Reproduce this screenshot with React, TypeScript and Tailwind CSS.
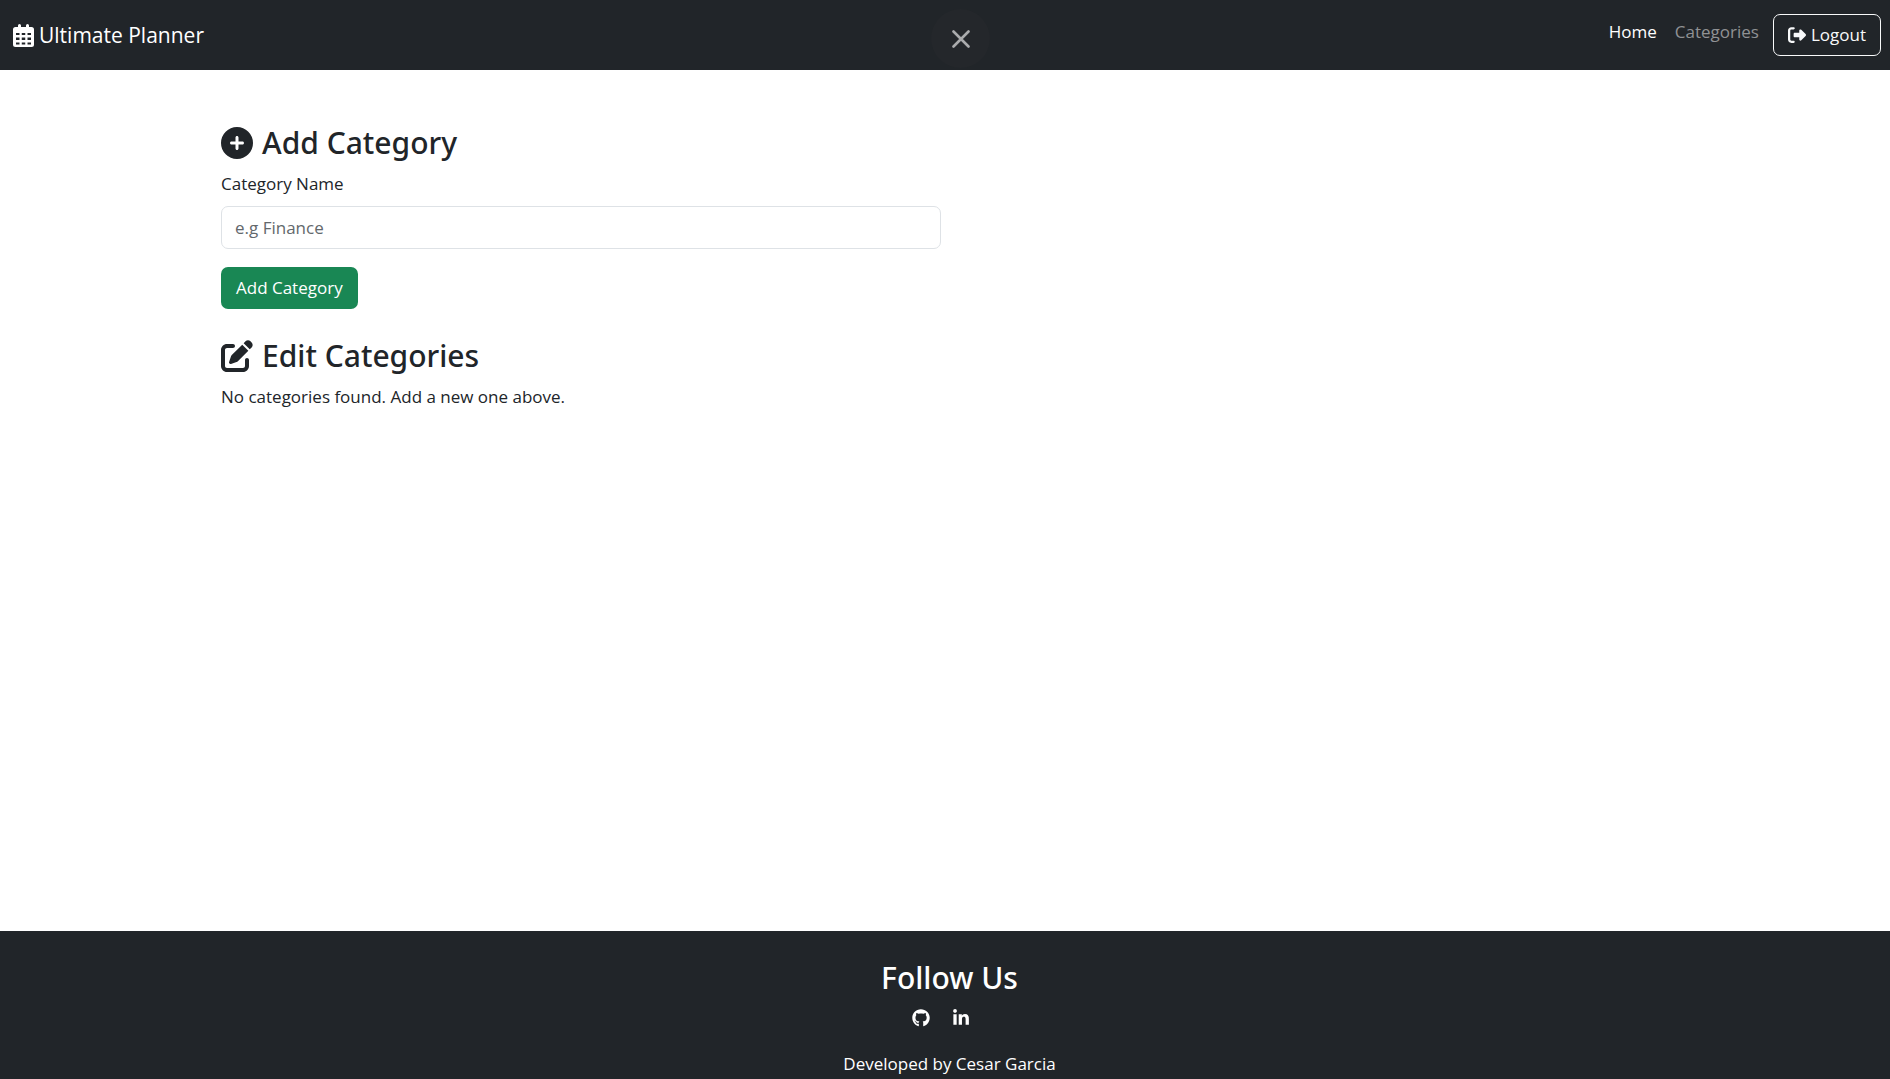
import {
  FaCirclePlus,
  FaGithub,
  FaLinkedinIn,
  FaPenToSquare,
  FaRightFromBracket,
} from 'react-icons/fa6';

function CalendarIcon() {
  return (
    <svg viewBox="0 0 21 23" className="h-[23px] w-[21px]" fill="currentColor" aria-hidden="true">
      <path
        fillRule="evenodd"
        d="M5 1.500a1.500 1.500 0 0 1 3 0V3h5V1.500a1.500 1.500 0 0 1 3 0V3h2.500A2.500 2.500 0 0 1 21 5.500v15a2.500 2.500 0 0 1-2.500 2.500h-16A2.500 2.500 0 0 1 0 20.500v-15A2.500 2.500 0 0 1 2.500 3H5ZM3 9v2h3.500V9ZM8.750 9v2h3.500V9ZM14.500 9v2H18V9ZM3 13.500V16h3.500v-2.500ZM8.750 13.500V16h3.500v-2.500ZM14.500 13.500V16H18v-2.500ZM3 18.500v2h3.500v-2ZM8.750 18.500v2h3.500v-2ZM14.500 18.500v2H18v-2Z"
      />
    </svg>
  );
}

function Header() {
  return (
    <header className="relative flex h-[70px] items-center justify-between bg-[#212529] pl-[13px] pr-[9px] text-white">
      <a href="#" className="flex items-center gap-[5px] text-[21px]">
        <CalendarIcon />
        Ultimate Planner
      </a>
      <button
        type="button"
        aria-label="Close"
        className="absolute left-1/2 top-[9px] ml-[-14px] flex size-[59px] items-center justify-center rounded-full bg-[#24272b] text-[#aaabad]"
      >
        <svg viewBox="0 0 18 18" className="size-[18px]" fill="none" stroke="currentColor" strokeWidth="2.6" strokeLinecap="round">
          <path d="M1.500 1.500l15 15M16.500 1.500l-15 15" />
        </svg>
      </button>
      <nav className="flex items-start text-[17px] leading-[26px]">
        <a href="#" className="mr-[18px] pt-[5px]">Home</a>
        <a href="#" className="mr-[14px] pt-[5px] text-[#909294]">Categories</a>
        <button type="button" className="flex h-[42px] items-center gap-[5px] rounded-[7px] border border-[#f8f9fa] px-[14px] text-[#f8f9fa]">
          <FaRightFromBracket className="size-[18px]" />
          Logout
        </button>
      </nav>
    </header>
  );
}

function Heading({ children }: { children: React.ReactNode }) {
  return (
    <h2 className="mb-[7px] flex items-center gap-[9px] font-['Noto_Sans',sans-serif] text-[30px] font-medium leading-[42px]">
      {children}
    </h2>
  );
}

export default function App() {
  return (
    <div className="flex h-screen flex-col overflow-hidden bg-white font-['Open_Sans',sans-serif] text-[17px] leading-[26px] text-[#212529]">
      <Header />
      <main className="mx-auto w-full max-w-[1448px] grow pt-[52px]">
        <form className="mb-[26px] max-w-[720px]">
          <Heading>
            <FaCirclePlus className="size-8" />
            Add Category
          </Heading>
          <label htmlFor="category" className="mb-[9px] block">Category Name</label>
          <input
            id="category"
            type="text"
            placeholder="e.g Finance"
            className="mb-[18px] block h-[43px] w-full rounded-[7px] border border-[#dee2e6] px-[13px] placeholder:text-[#63686c]"
          />
          <button type="button" className="h-[42px] rounded-[7px] bg-[#198754] px-[15px] text-white">
            Add Category
          </button>
        </form>
        <Heading>
          <FaPenToSquare className="size-8" />
          Edit Categories
        </Heading>
        <p>No categories found. Add a new one above.</p>
      </main>
      <footer className="flex h-[148px] shrink-0 flex-col items-center bg-[#212529] pt-[26px] text-white">
        <div className="ml-[9px]">
          <Heading>Follow Us</Heading>
        </div>
        <div className="mr-[9px] mt-[3px] flex gap-[22px]">
          <a href="#" aria-label="GitHub"><FaGithub className="size-[18px]" /></a>
          <a href="#" aria-label="LinkedIn"><FaLinkedinIn className="size-[18px]" /></a>
        </div>
        <p className="ml-[9px] mt-[24px]">Developed by Cesar Garcia</p>
      </footer>
    </div>
  );
}
